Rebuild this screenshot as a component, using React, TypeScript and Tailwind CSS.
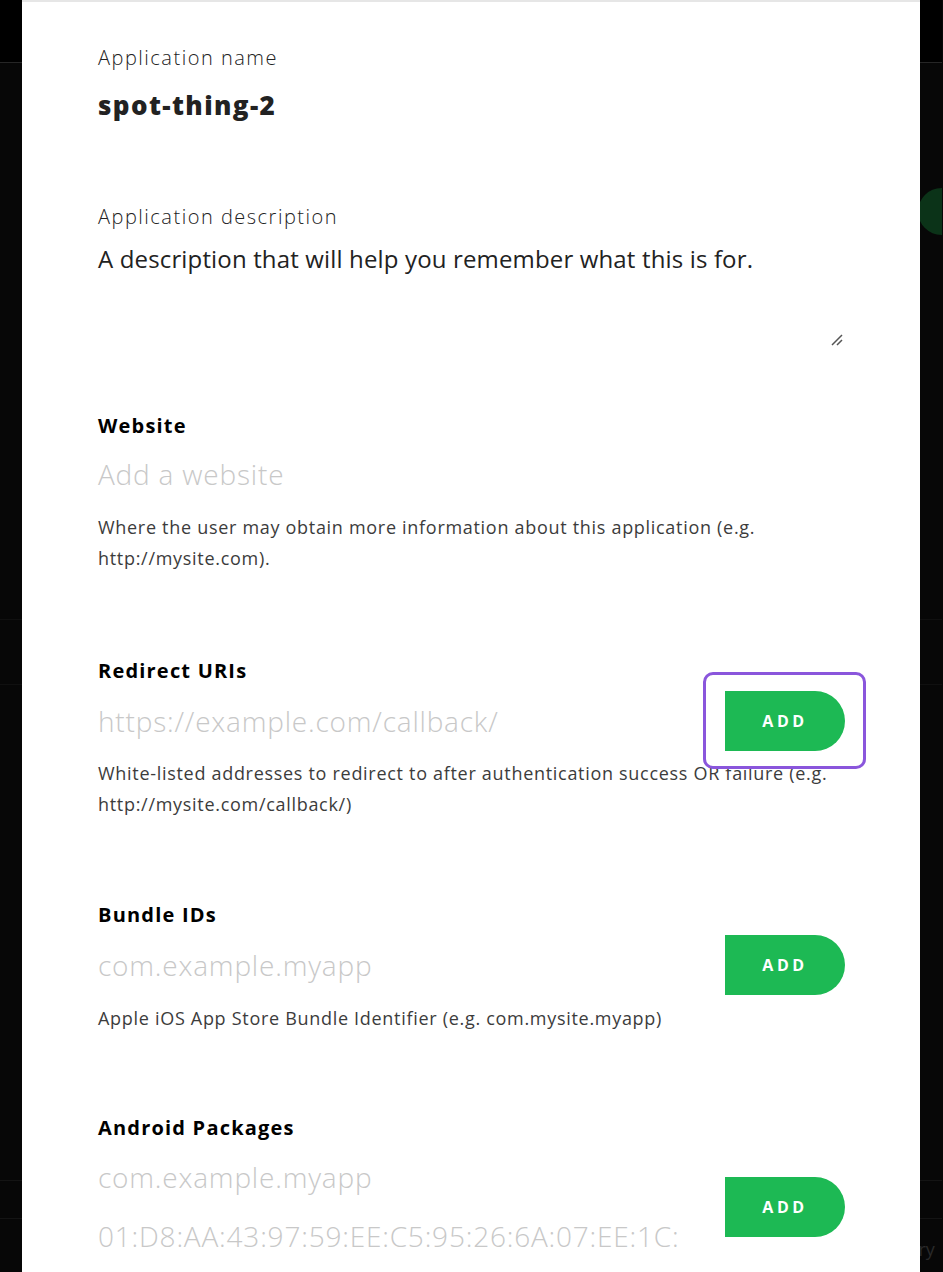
import React from "react";

const font = { fontFamily: "'Open Sans', Lato, sans-serif" };

function AddButton() {
  return (
    <button
      type="button"
      className="h-[60px] w-[120px] shrink-0 rounded-r-full bg-[#1db954] text-[16px] font-bold tracking-[0.22em] text-white"
    >
      ADD
    </button>
  );
}

function SideStrip({ right }: { right?: boolean }) {
  return (
    <div className="relative w-[22px] shrink-0 overflow-hidden bg-[#070707]">
      <div className="h-[63px] border-b border-[#262626] bg-black" />
      <div className="mt-[556px] h-px bg-[#101010]" />
      <div className="mt-[64px] h-px bg-[#101010]" />
      {right && (
        <div className="absolute left-[-2px] top-[188px] h-[47px] w-[60px] rounded-full bg-[#0b3318]" />
      )}
      <div className="absolute left-0 top-[1180px] h-px w-full bg-[#141414]" />
      <div className="absolute left-0 top-[1218px] h-px w-full bg-[#141414]" />
      {right && (
        <div className="absolute left-[-8px] top-[1236px] text-[18px] text-[#2a2a2a]">
          try
        </div>
      )}
    </div>
  );
}

const label = "text-[20px] leading-[28px] font-bold tracking-[1.2px] text-black";
const placeholder = "text-[28px] leading-[36px] font-light tracking-[0.8px] text-[#c8c8c8]";
const helper = "text-[18px] leading-[31px] tracking-[0.7px] text-[#3c3c3c]";

export default function App() {
  return (
    <div className="flex h-[1272px] w-full overflow-hidden bg-[#070707]" style={font}>
      <SideStrip />
      <div className="w-[898px] shrink-0 border-t-2 border-[#e6e6e6] bg-white px-[76px] pr-[75px] pt-[42px]">
        {/* Application name */}
        <div className="text-[20px] leading-[28px] font-light tracking-[1.5px] text-[#222]">Application name</div>
        <div className="mt-[16px] text-[26px] leading-[34px] font-extrabold tracking-[1.4px] text-[#222]">
          spot-thing-2
        </div>

        {/* Description */}
        <div className="mt-[81px] text-[20px] leading-[28px] font-light tracking-[1.5px] text-[#222]">
          Application description
        </div>
        <div className="relative mt-[12px] h-[107px] text-[24px] leading-[32px] tracking-[0.15px] text-[#222]">
          A description that will help you remember what this is for.
          <svg className="absolute right-[2px] bottom-[4px]" width="12" height="12" viewBox="0 0 12 12">
            <path d="M1 11 L11 1 M6 11 L11 6" stroke="#555" strokeWidth="1.5" />
          </svg>
        </div>

        {/* Website */}
        <div className={`mt-[62px] ${label}`}>Website</div>
        <div className={`mt-[16px] ${placeholder}`}>Add a website</div>
        <p className={`mt-[20px] ${helper}`}>
          Where the user may obtain more information about this application (e.g. http://mysite.com).
        </p>

        {/* Redirect URIs */}
        <div className={`mt-[83px] ${label}`}>Redirect URIs</div>
        <div className="mt-[6px] flex items-center gap-[25px]">
          <div className={`flex-1 ${placeholder}`}>https://example.com/callback/</div>
          <div className="relative">
            <AddButton />
            <div className="pointer-events-none absolute -left-[22px] -right-[21px] -top-[19px] -bottom-[18px] rounded-[10px] border-[3px] border-[#8a56dc]" />
          </div>
        </div>
        <p className={`mt-[7px] ${helper}`}>
          White-listed addresses to redirect to after authentication success OR failure (e.g.
          http://mysite.com/callback/)
        </p>

        {/* Bundle IDs */}
        <div className={`mt-[81px] ${label}`}>Bundle IDs</div>
        <div className="mt-[6px] flex items-center gap-[25px]">
          <div className={`flex-1 ${placeholder}`}>com.example.myapp</div>
          <AddButton />
        </div>
        <p className={`mt-[8px] ${helper}`}>Apple iOS App Store Bundle Identifier (e.g. com.mysite.myapp)</p>

        {/* Android Packages */}
        <div className={`mt-[80px] ${label}`}>Android Packages</div>
        <div className="mt-[17px] flex items-center gap-[25px]">
          <div className={`flex flex-1 flex-col gap-[23px] ${placeholder}`}>
            <div>com.example.myapp</div>
            <div className="whitespace-nowrap">01:D8:AA:43:97:59:EE:C5:95:26:6A:07:EE:1C:</div>
          </div>
          <AddButton />
        </div>
      </div>
      <SideStrip right />
    </div>
  );
}
